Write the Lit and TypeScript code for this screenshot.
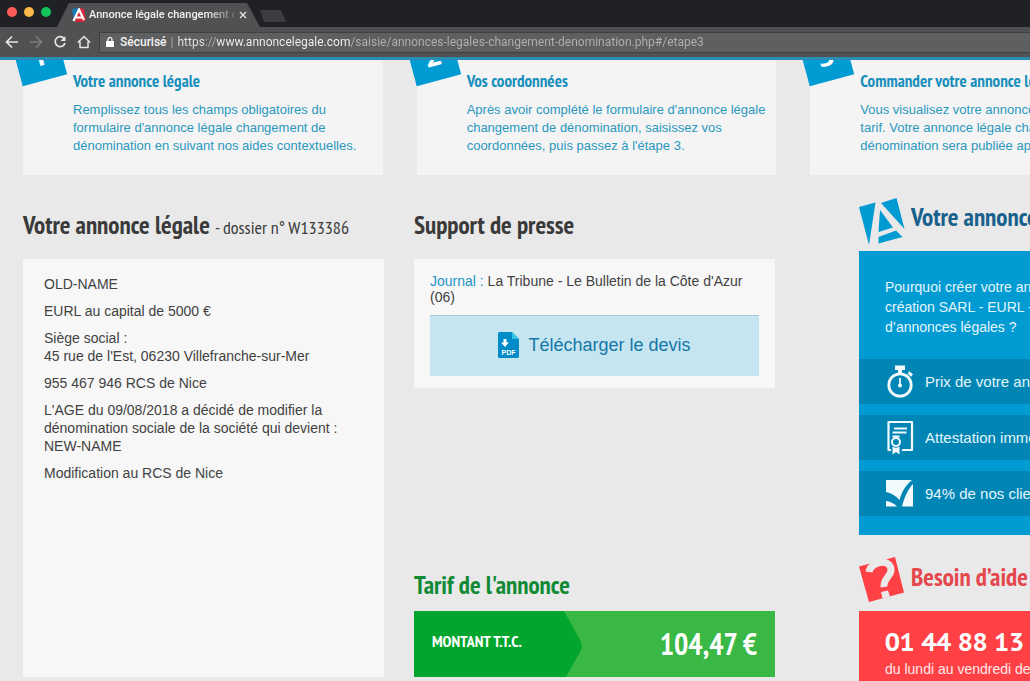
import { LitElement, html, css, svg } from "lit";
import { customElement } from "lit/decorators.js";

const STEPS = [
  {
    title: "Votre annonce légale",
    lines: [
      "Remplissez tous les champs obligatoires du",
      "formulaire d'annonce légale changement de",
      "dénomination en suivant nos aides contextuelles.",
    ],
  },
  {
    title: "Vos coordonnées",
    lines: [
      "Après avoir complété le formulaire d'annonce légale",
      "changement de dénomination, saisissez vos",
      "coordonnées, puis passez à l'étape 3.",
    ],
  },
  {
    title: "Commander votre annonce légale",
    lines: [
      "Vous visualisez votre annonce et",
      "tarif. Votre annonce légale changement de",
      "dénomination sera publiée après",
    ],
  },
];

const NOTICE = [
  ["OLD-NAME"],
  ["EURL au capital de 5000 €"],
  ["Siège social :", "45 rue de l'Est, 06230 Villefranche-sur-Mer"],
  ["955 467 946 RCS de Nice"],
  [
    "L'AGE du 09/08/2018 a décidé de modifier la",
    "dénomination sociale de la société qui devient :",
    "NEW-NAME",
  ],
  ["Modification au RCS de Nice"],
];

const stopwatch = svg`<svg viewBox="0 0 28 34" width="28" height="34" fill="none" stroke="#f2fafd">
  <path d="M9 0.5h10v4.5h-3v3h-4v-3h-3z" fill="#f2fafd" stroke="none"/>
  <circle cx="14" cy="20" r="11.2" stroke-width="2.8"/>
  <path d="M22.5 7.5l3.500 3" stroke-width="3"/>
  <path d="M14 13v7" stroke-width="1.8"/>
  <circle cx="14" cy="20.6" r="2" fill="#f2fafd" stroke="none"/>
</svg>`;

const certificate = svg`<svg viewBox="0 0 28 35" width="28" height="35" fill="none" stroke="#f2fafd" stroke-width="2.2">
  <path d="M5 30H2.5V2h23.500v28H16" stroke-linejoin="round"/>
  <path d="M8 8.500h13M6.500 12.500h14M6.500 16.500h7" stroke-width="1.8"/>
  <circle cx="10" cy="22" r="4" stroke-width="2"/>
  <path d="M6.500 26.500v8l3.500-2.500 3.500 2.500v-8l-3.500 1.500z" fill="#f2fafd" stroke="none"/>
</svg>`;

const tick = svg`<svg viewBox="0 0 28 27" width="28" height="27" fill="#f2fafd">
  <path d="M0 0H26C20 5 16 11 13.500 20C9.500 15.500 5 13 0 12z"/>
  <path d="M0 21c4 .5 8 2 11 5.500H0z"/>
  <path d="M27 4v22.500H16C18 18 22 9 27 4z"/>
</svg>`;

@customElement("app-root")
export class AppRoot extends LitElement {
  static styles = css`
    :host {
      --narrow: "PT Sans Narrow", "Liberation Sans Narrow", "Open Sans Condensed", "Roboto Condensed", "Liberation Sans", sans-serif;
      --blue: #009bd2;
      display: flex;
      flex-direction: column;
      height: 100vh;
      overflow: hidden;
      background: #e9e9e9;
      color: #424242;
      font: 14px/18px "Liberation Sans", Arial, sans-serif;
    }
    * { box-sizing: border-box; }
    h2, h3, p, ul { margin: 0; padding: 0; }
    h2, h3 { font-family: var(--narrow); white-space: nowrap; }
    svg { display: block; flex: none; }
    button { border: 0; padding: 0; background: none; font: inherit; color: inherit; }

    .tabs {
      display: flex;
      height: 27px;
      flex: none;
      background: #202124;
      padding-left: 7px;
    }
    .lights { display: flex; gap: 7px; padding-top: 7px; width: 50px; }
    .light { width: 10px; height: 10px; border-radius: 50%; background: #fc5b57; }
    .light.mid { background: #fcb848; }
    .light.go { background: #10c45b; }
    .tab {
      display: flex;
      align-items: center;
      width: 203px;
      height: 24px;
      margin-top: 3px;
      padding: 0 0 0 15px;
      background: #505152;
      clip-path: polygon(12px 0, 190px 0, 203px 100%, 0 100%);
      font: 500 11px/16px Roboto, sans-serif;
      color: #f1f1f1;
    }
    .tab-name {
      margin-left: 3px;
      width: 145px;
      overflow: hidden;
      white-space: nowrap;
      text-align: left;
      -webkit-mask-image: linear-gradient(90deg, #000 118px, transparent 150px);
      mask-image: linear-gradient(90deg, #000 118px, transparent 150px);
    }
    .tab-close { margin-left: 5px; }
    .new-tab {
      width: 26px;
      height: 12px;
      margin-top: 10px;
      background: #3c3d3f;
      clip-path: polygon(0 0, 21px 0, 26px 100%, 4px 100%);
    }
    .toolbar {
      display: flex;
      align-items: center;
      height: 30px;
      flex: none;
      background: #505152;
      padding-left: 5px;
    }
    .nav { display: flex; gap: 10px; width: 94px; }
    .address {
      display: flex;
      align-items: center;
      flex: 1;
      height: 21px;
      border: 1px solid #3f4041;
      border-right: 0;
      background: #5e5f60;
      padding-left: 6px;
      font: 12px/16px Roboto, sans-serif;
      color: #f4f4f4;
    }
    .secure { margin-left: 6px; font-weight: 500; }
    .bar { margin: 0 4px; color: #a5a5a5; }
    .url {
      flex: 1;
      min-width: 0;
      border: 0;
      padding: 0;
      outline: 0;
      font: inherit;
      color: transparent;
      background: linear-gradient(90deg, #e4e4e4 28px, #a9a9a9 28px, #a9a9a9 39px, #f4f4f4 39px, #f4f4f4 173px, #b1b1b1 173px);
      -webkit-background-clip: text;
      background-clip: text;
    }

    .site {
      flex: 1;
      min-height: 0;
      overflow: hidden;
      border-top: 3px solid #2a8db4;
    }
    .content { min-width: 1193px; padding: 0 23px; }
    .steps { display: grid; grid-template-columns: repeat(3, 1fr); gap: 34px; }
    .step {
      position: relative;
      height: 115px;
      padding: 10px 0 0 50px;
      background: #f4f4f4;
      color: #2a98be;
      white-space: nowrap;
      font-size: 13px;
    }
    .step h3 { font-size: 17px; line-height: 22px; margin-bottom: 9px; color: #178fbc; }
    .step p { line-height: 18px; }
    .badge {
      position: absolute;
      left: -7px;
      top: -25px;
      width: 46px;
      height: 46px;
      transform: rotate(-15deg);
      background: var(--blue);
      color: #fff;
      font: bold 27px/42px "Open Sans", sans-serif;
      text-align: center;
    }
    .main { display: flex; align-items: flex-start; padding-top: 22px; }
    .file { display: grid; grid-template-columns: 361px 361px; column-gap: 30px; flex: none; }
    .col { display: flex; flex-direction: column; }
    .col h2 { font-size: 25px; line-height: 32px; margin: 12px 0 18px; color: #3a3a3a; }
    .col h2 small { font-size: 18px; line-height: 18px; font-weight: normal; }
    .panel { background: #f7f7f7; }
    .notice { height: 418px; padding: 16px 21px; }
    .notice p { margin-bottom: 9px; }
    .press { padding: 14px 16px 12px; line-height: 16px; }
    .press em { font-style: normal; color: #2196c5; }
    .devis {
      display: flex;
      align-items: center;
      justify-content: center;
      gap: 9px;
      margin-top: 10px;
      height: 61px;
      padding-bottom: 2px;
      border-top: 1px solid #a9c9d8;
      background: #c5e5f1;
      color: #1578a8;
      font-size: 18px;
      line-height: 24px;
      text-decoration: none;
    }
    .tarif { margin-top: auto; }
    .tarif h2 { margin: 0 0 10px; color: #118a36; }
    .amount {
      display: flex;
      align-items: center;
      justify-content: space-between;
      height: 66px;
      padding-right: 18px;
      background: #39b846;
      color: #fff;
      font: bold 30px/36px var(--narrow);
    }
    .amount-label {
      display: flex;
      align-items: center;
      width: 168px;
      height: 100%;
      padding: 0 0 6px 18px;
      background: #02a52d;
      clip-path: polygon(0 0, 150px 0, 166px 29px, 168px 35px, 166px 41px, 152px 100%, 0 100%);
      font-size: 16px;
    }
    .side { flex: 1; padding-left: 84px; white-space: nowrap; }
    .side-head { display: flex; gap: 6px; height: 54px; }
    .side-head h2 { font-size: 25px; line-height: 40px; color: #17618c; }
    .why { height: 284px; padding-top: 26px; background: var(--blue); color: #e3f5fc; }
    .why p { line-height: 20px; padding-left: 26px; margin-bottom: 22px; }
    .why ul { list-style: none; display: grid; gap: 11px; }
    .why li {
      display: flex;
      align-items: center;
      gap: 11px;
      height: 45px;
      padding-left: 27px;
      background: #0085b4;
      font-size: 15px;
    }
    .help { margin-top: 22px; }
    .help h2 { color: #e6474d; }
    .phone { height: 110px; padding: 13px 26px; background: #ff4044; color: #ffe9e9; }
    .phone strong { display: block; font: bold 25px/36px "PT Sans Caption", "PT Sans", "Open Sans", sans-serif; color: #fff; }
  `;

  render() {
    return html`
      <header>
        <div class="tabs">
          <div class="lights">
            <span class="light"></span><span class="light mid"></span><span class="light go"></span>
          </div>
          <div class="tab">
            <svg viewBox="0 0 14 14" width="14" height="14">
              <path d="M0 1l7-1L2 13z" fill="#1679b8" />
              <path d="M8 0l4 1 2 11-2 2H3z" fill="#d9283c" />
              <path d="M1.500 13L7 1.500 12 12M4 9.500h7" fill="none" stroke="#fff" stroke-width="2.2" />
            </svg>
            <span class="tab-name">Annonce légale changement de</span>
            <button class="tab-close" aria-label="Fermer l'onglet">
              <svg viewBox="0 0 8 8" width="8" height="8" stroke="#e2e2e2" stroke-width="1.4"><path d="M1 1l6 6M7 1l-6 6" /></svg>
            </button>
          </div>
          <button class="new-tab" aria-label="Nouvel onglet"></button>
        </div>
        <div class="toolbar">
          <nav class="nav">
            <button aria-label="Précédent">
              <svg viewBox="0 0 14 14" width="14" height="14" fill="none" stroke="#e6e6e6" stroke-width="1.7"><path d="M13 7H1.500M7 1.500L1.500 7 7 12.500" /></svg>
            </button>
            <button aria-label="Suivant">
              <svg viewBox="0 0 14 14" width="14" height="14" fill="none" stroke="#7d7e7f" stroke-width="1.7"><path d="M1 7h11.500M7 1.500L12.500 7 7 12.500" /></svg>
            </button>
            <button aria-label="Actualiser">
              <svg viewBox="0 0 14 14" width="14" height="14" fill="none" stroke="#e6e6e6" stroke-width="1.7"><path d="M11.300 3.700A5 5 0 1 0 12 8" /><path d="M12.500 1v5h-5z" fill="#e6e6e6" stroke="none" /></svg>
            </button>
            <button aria-label="Accueil">
              <svg viewBox="0 0 14 14" width="14" height="14" fill="none" stroke="#e6e6e6" stroke-width="1.5"><path d="M.8 7.500L7 1.500l6.200 6M3 6.500V12.500h8V6.500" /></svg>
            </button>
          </nav>
          <label class="address">
            <svg viewBox="0 0 8 10" width="8" height="10"><path d="M0 4h8v6H0z" fill="#fff" /><path d="M2 4.500V2.500a2 2 0 0 1 4 0v2" fill="none" stroke="#fff" stroke-width="1.200" /></svg>
            <span class="secure">Sécurisé</span><span class="bar">|</span>
            <input class="url" type="text" .value=${"https://www.annoncelegale.com/saisie/annonces-legales-changement-denomination.php#/etape3"} />
          </label>
        </div>
      </header>

      <div class="site">
        <div class="content">
          <section class="steps">
            ${STEPS.map(
              (s, i) => html`<article class="step">
                <span class="badge">${i + 1}</span>
                <h3>${s.title}</h3>
                ${s.lines.map((l) => html`<p>${l}</p>`)}
              </article>`
            )}
          </section>

          <main class="main">
            <div class="file">
              <section class="col">
                <h2>Votre annonce légale <small>- dossier n° W133386</small></h2>
                <div class="panel notice">
                  ${NOTICE.map((p) => html`<p>${p.map((l, i) => html`${i ? html`<br />` : ""}${l}`)}</p>`)}
                </div>
              </section>

              <section class="col">
                <h2>Support de presse</h2>
                <div class="panel press">
                  <p><em>Journal :</em> La Tribune - Le Bulletin de la Côte d'Azur (06)</p>
                  <a class="devis" href="#">
                    <svg viewBox="0 0 21 26" width="21" height="26">
                      <path d="M1.500 0H14l7 7v17.500a1.500 1.500 0 0 1-1.500 1.500h-18A1.500 1.500 0 0 1 0 24.500v-23A1.500 1.500 0 0 1 1.500 0z" fill="#008cc8" />
                      <path d="M14 0l7 7h-7z" fill="#33c4e8" />
                      <path d="M5.500 7h3v3.500H11L7 15l-4-4.500h2.500z" fill="#fff" />
                      <text x="3.500" y="22.500" font-family="Liberation Sans, sans-serif" font-weight="bold" font-size="7" fill="#fff">PDF</text>
                    </svg>
                    Télécharger le devis
                  </a>
                </div>
                <div class="tarif">
                  <h2>Tarif de l'annonce</h2>
                  <div class="amount"><span class="amount-label">MONTANT T.T.C.</span><span>104,47 €</span></div>
                </div>
              </section>
            </div>

            <aside class="side">
              <div class="side-head">
                <svg viewBox="0 0 46 48" width="46" height="48" fill="#009bd2">
                  <path d="M0 10L16.500 5.500 10 48z" />
                  <path d="M22 6L37.500 1l8 31z" />
                  <path d="M21 13L34 30.500 19.500 35z" />
                  <path d="M19.500 40L37 33.500l6.500 6.500L19.500 46.500z" />
                </svg>
                <h2>Votre annonce légale</h2>
              </div>
              <div class="why">
                <p>Pourquoi créer votre annonce<br />création SARL - EURL - SAS<br />d’annonces légales ?</p>
                <ul>
                  <li>${stopwatch}Prix de votre annonce</li>
                  <li>${certificate}Attestation immédiate</li>
                  <li>${tick}94% de nos clients</li>
                </ul>
              </div>
              <div class="help">
                <div class="side-head">
                  <svg viewBox="0 0 46 46" width="46" height="46">
                    <path d="M0 9.500L36 0l9 35.500-35 9.500z" fill="#ff4044" />
                    <path d="M10 15C11 6 30 0 32 12c1 7-8 9-7 18" fill="none" stroke="#e9e9e9" stroke-width="7" />
                    <path d="M22 35l7-1.500 2 6-7.500 2z" fill="#e9e9e9" />
                  </svg>
                  <h2>Besoin d’aide ?</h2>
                </div>
                <div class="phone"><strong>01 44 88 13 88</strong>du lundi au vendredi de</div>
              </div>
            </aside>
          </main>
        </div>
      </div>
    `;
  }
}
